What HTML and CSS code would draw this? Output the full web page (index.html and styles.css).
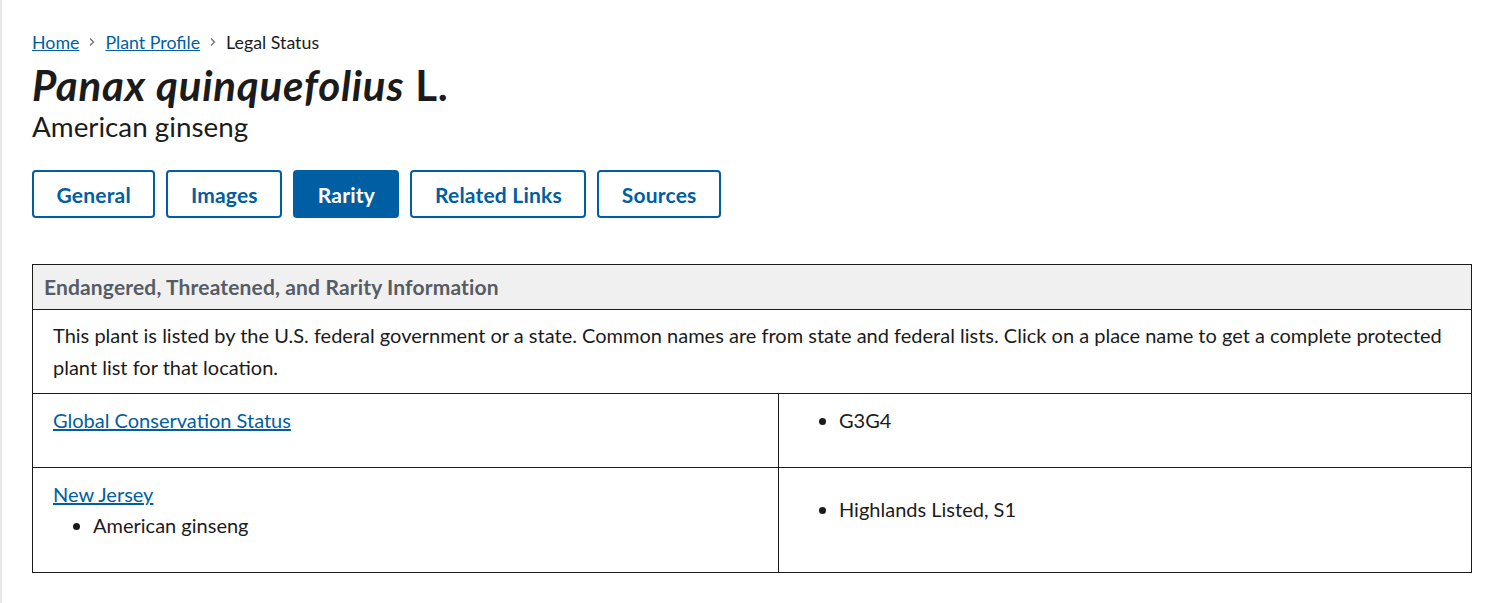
FILE: index.html
```html
<!DOCTYPE html>
<html lang="en">
<head>
<meta charset="utf-8">
<title>Panax quinquefolius L. - Legal Status</title>
<link rel="stylesheet" href="styles.css">
</head>
<body>
<div class="page">
  <nav class="breadcrumb">
    <a href="#">Home</a>
    <svg class="chev" viewBox="0 0 8 10" width="8" height="10"><path d="M2 1.5 L5.5 5 L2 8.5" fill="none" stroke="#71767a" stroke-width="1.4"/></svg>
    <a href="#">Plant Profile</a>
    <svg class="chev" viewBox="0 0 8 10" width="8" height="10"><path d="M2 1.5 L5.5 5 L2 8.5" fill="none" stroke="#71767a" stroke-width="1.4"/></svg>
    <span class="current">Legal Status</span>
  </nav>
  <h1 class="title"><em>Panax quinquefolius</em> L.</h1>
  <div class="common">American ginseng</div>
  <div class="tabs">
    <a class="tab" href="#">General</a>
    <a class="tab" href="#">Images</a>
    <a class="tab active" href="#">Rarity</a>
    <a class="tab" href="#">Related Links</a>
    <a class="tab" href="#">Sources</a>
  </div>
  <table class="rarity">
    <colgroup><col class="c1"><col class="c2"></colgroup>
    <thead>
      <tr><th colspan="2">Endangered, Threatened, and Rarity Information</th></tr>
    </thead>
    <tbody>
      <tr><td colspan="2" class="desc">This plant is listed by the U.S. federal government or a state. Common names are from state and federal lists. Click on a place name to get a complete protected plant list for that location.</td></tr>
      <tr>
        <td class="cell"><a href="#">Global Conservation Status</a></td>
        <td class="cell"><ul><li>G3G4</li></ul></td>
      </tr>
      <tr>
        <td class="cell"><a href="#">New Jersey</a><ul><li>American ginseng</li></ul></td>
        <td class="cell"><ul><li>Highlands Listed, S1</li></ul></td>
      </tr>
    </tbody>
  </table>
</div>
</body>
</html>
```
FILE: styles.css
```css
html, body { margin: 0; padding: 0; background: #fff; }
body {
  font-family: Lato, "Liberation Sans", sans-serif;
  color: #1b1b1b;
}
.page {
  border-left: 2px solid #e8e8e8;
  padding: 30px 0 30px 30px;
  width: 1440px;
  min-height: 540px;
}
a { color: #005ea2; }
.breadcrumb {
  display: flex;
  align-items: center;
  gap: 7px;
  font-size: 17.8px;
  line-height: 24px;
  height: 24px;
}
.breadcrumb .chev { margin: 0 2px; }
.breadcrumb .current { color: #1b1b1b; }
.title {
  margin: 7px 0 0;
  font-size: 42px;
  line-height: 48px;
  font-weight: 700;
  letter-spacing: 0.8px;
}
.title em { font-style: italic; }
.common {
  font-size: 27.8px;
  line-height: 34px;
  margin-top: 1px;
}
.tabs {
  display: flex;
  gap: 11px;
  margin-top: 26px;
}
.tab {
  display: flex;
  align-items: center;
  justify-content: center;
  height: 48px;
  box-sizing: border-box;
  padding: 0 22.5px;
  border: 2px solid #005ea2;
  border-radius: 4px;
  font-size: 21px;
  font-weight: 700;
  letter-spacing: 0.2px;
  color: #005ea2;
  text-decoration: none;
  background: #fff;
}
.tab.active { background: #005ea2; color: #fff; }
.rarity {
  margin-top: 46px;
  width: 1440px;
  border-collapse: collapse;
  table-layout: fixed;
  font-size: 20px;
}
.rarity .c1 { width: 746px; }
.rarity th {
  background: #f0f0f0;
  color: #565c65;
  text-align: left;
  font-weight: 700;
  font-size: 21px;
  letter-spacing: 0.15px;
  padding: 6px 11px 6px 11px;
  line-height: 32px;
  border: 1px solid #1b1b1b;
}
.rarity td {
  border: 1px solid #1b1b1b;
  line-height: 32px;
}
.rarity td.desc {
  padding: 9px 20px 10px;
}
.rarity td.cell {
  padding: 10px 20px 31px;
  vertical-align: middle;
}
.rarity td.cell ul li { line-height: 31px; }
.rarity ul { margin: 0; padding-left: 40px; }
```
